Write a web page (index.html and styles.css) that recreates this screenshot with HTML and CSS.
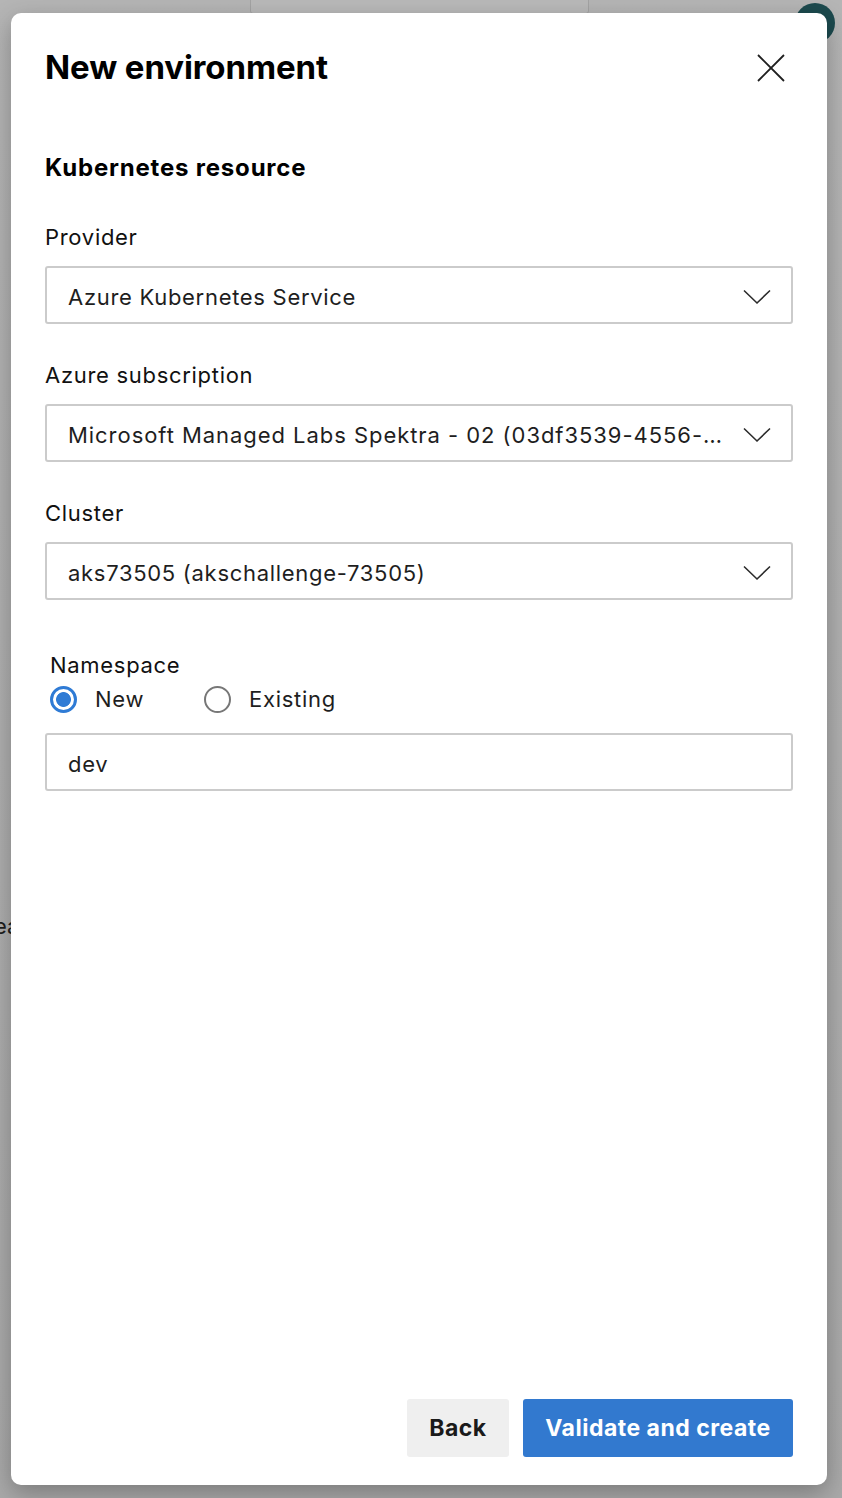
FILE: index.html
```html
<!DOCTYPE html>
<html lang="en">
<head>
<meta charset="utf-8">
<title>New environment</title>
<link rel="stylesheet" href="styles.css">
</head>
<body>
<div class="backdrop">
  <div class="bg-box"></div>
  <div class="bg-avatar"></div>
  <div class="bg-text">Create</div>

  <div class="dialog" role="dialog">
    <div class="dialog-header">
      <h1 class="dialog-title">New environment</h1>
      <button class="close-btn" aria-label="Close">
        <svg width="30" height="30" viewBox="0 0 30 30"><path d="M2 2 L28 28 M28 2 L2 28" stroke="#1f1f1f" stroke-width="1.8" fill="none"/></svg>
      </button>
    </div>

    <h2 class="section-title">Kubernetes resource</h2>

    <div class="field field-first">
      <div class="label">Provider</div>
      <div class="select">
        <span class="select-text">Azure Kubernetes Service</span>
        <svg class="chev" width="28" height="16" viewBox="0 0 28 16"><path d="M1 1.5 L14 14 L27 1.5" stroke="#2b2b2b" stroke-width="1.6" fill="none"/></svg>
      </div>
    </div>

    <div class="field">
      <div class="label">Azure subscription</div>
      <div class="select">
        <span class="select-text sub-text">Microsoft Managed Labs Spektra - 02 (03df3539-4556-…</span>
        <svg class="chev" width="28" height="16" viewBox="0 0 28 16"><path d="M1 1.5 L14 14 L27 1.5" stroke="#2b2b2b" stroke-width="1.6" fill="none"/></svg>
      </div>
    </div>

    <div class="field">
      <div class="label">Cluster</div>
      <div class="select">
        <span class="select-text">aks73505 (akschallenge-73505)</span>
        <svg class="chev" width="28" height="16" viewBox="0 0 28 16"><path d="M1 1.5 L14 14 L27 1.5" stroke="#2b2b2b" stroke-width="1.6" fill="none"/></svg>
      </div>
    </div>

    <div class="field field-ns">
      <div class="label label-ns">Namespace</div>
      <div class="radio-row">
        <label class="radio"><span class="radio-dot checked"></span><span>New</span></label>
        <label class="radio"><span class="radio-dot"></span><span>Existing</span></label>
      </div>
      <div class="input">dev</div>
    </div>

    <div class="footer">
      <button class="btn btn-secondary">Back</button>
      <button class="btn btn-primary">Validate and create</button>
    </div>
  </div>
</div>
</body>
</html>
```

FILE: styles.css
```css
* { box-sizing: border-box; }
html, body { margin: 0; padding: 0; }
body {
  background: #b3b3b3;
  font-family: Inter, "Noto Sans", "Liberation Sans", sans-serif;
  color: #1e1e1e;
  width: 842px;
  height: 1498px;
  overflow: hidden;
}
.backdrop {
  position: relative;
  width: 842px;
  height: 1498px;
  padding: 13px 15px 0 11px;
  background: linear-gradient(#b5b5b5, #a9a9a9);
}
.bg-box {
  position: absolute;
  left: 250px;
  top: -6px;
  width: 339px;
  height: 20px;
  border: 1px solid #a3a3a3;
  border-radius: 3px;
  background: #b9b9b9;
}
.bg-avatar {
  position: absolute;
  left: 795px;
  top: 3px;
  width: 40px;
  height: 40px;
  border-radius: 50%;
  background: #1c4a4e;
}
.bg-text {
  position: absolute;
  left: -30px;
  top: 913px;
  font-size: 22px;
  color: #1d1d1d;
}
.dialog {
  position: relative;
  width: 816px;
  height: 1472px;
  background: #fff;
  border-radius: 10px;
  box-shadow: 0 8px 24px rgba(0,0,0,0.28);
  padding: 34px 34px 28px 34px;
  display: flex;
  flex-direction: column;
}
.dialog-header {
  display: flex;
  justify-content: space-between;
  align-items: center;
  height: 40px;
}
.dialog-title {
  margin: 0;
  font-size: 33px;
  line-height: 40px;
  font-weight: 700;
  letter-spacing: -0.1px;
  color: #000;
}
.close-btn {
  border: 0;
  background: none;
  padding: 0;
  margin-right: 7px;
  margin-top: 2px;
  width: 30px;
  height: 30px;
  display: flex;
}
.section-title {
  margin: 66px 0 0 0;
  font-size: 24px;
  line-height: 30px;
  font-weight: 700;
  color: #000;
  letter-spacing: 0.8px;
}
.field { margin-top: 37px; }
.field-first { margin-top: 40px; }
.field-ns { margin-top: 51px; }
.label {
  font-size: 22px;
  line-height: 28px;
  color: #111;
  letter-spacing: 0.7px;
  margin-bottom: 15px;
}
.label-ns { margin-left: 5px; margin-bottom: 6px; }
.select, .input {
  height: 58px;
  border: 2px solid #cbcbcb;
  border-radius: 3px;
  display: flex;
  align-items: center;
  padding: 3px 20px 0 21px;
  font-size: 22px;
  letter-spacing: 0.7px;
  color: #1e1e1e;
}
.select-text {
  flex: 1;
  white-space: nowrap;
  overflow: hidden;
}
.sub-text { letter-spacing: 0.95px; }
.chev { flex: none; margin-left: 10px; }
.radio-row {
  display: flex;
  align-items: center;
  height: 28px;
  margin-left: 5px;
  gap: 60px;
  margin-bottom: 20px;
}
.radio {
  display: flex;
  align-items: center;
  gap: 18px;
  font-size: 22px;
  letter-spacing: 0.7px;
  color: #1e1e1e;
}
.radio-dot {
  width: 27px;
  height: 27px;
  border-radius: 50%;
  border: 2px solid #777;
  background: #fff;
}
.radio-dot.checked {
  border: 3px solid #2f7bd5;
  background: radial-gradient(circle, #2f7bd5 0 7px, #fff 7.8px);
}
.footer {
  margin-top: auto;
  display: flex;
  justify-content: flex-end;
  gap: 14px;
}
.btn {
  height: 58px;
  border: 0;
  border-radius: 3px;
  font-family: inherit;
  font-size: 23px;
  font-weight: 700;
  letter-spacing: 0.5px;
  padding: 0 10px;
}
.btn-secondary {
  width: 102px;
  background: #efefef;
  color: #1a1a1a;
}
.btn-primary {
  width: 270px;
  background: #3279cf;
  color: #fff;
}
```
